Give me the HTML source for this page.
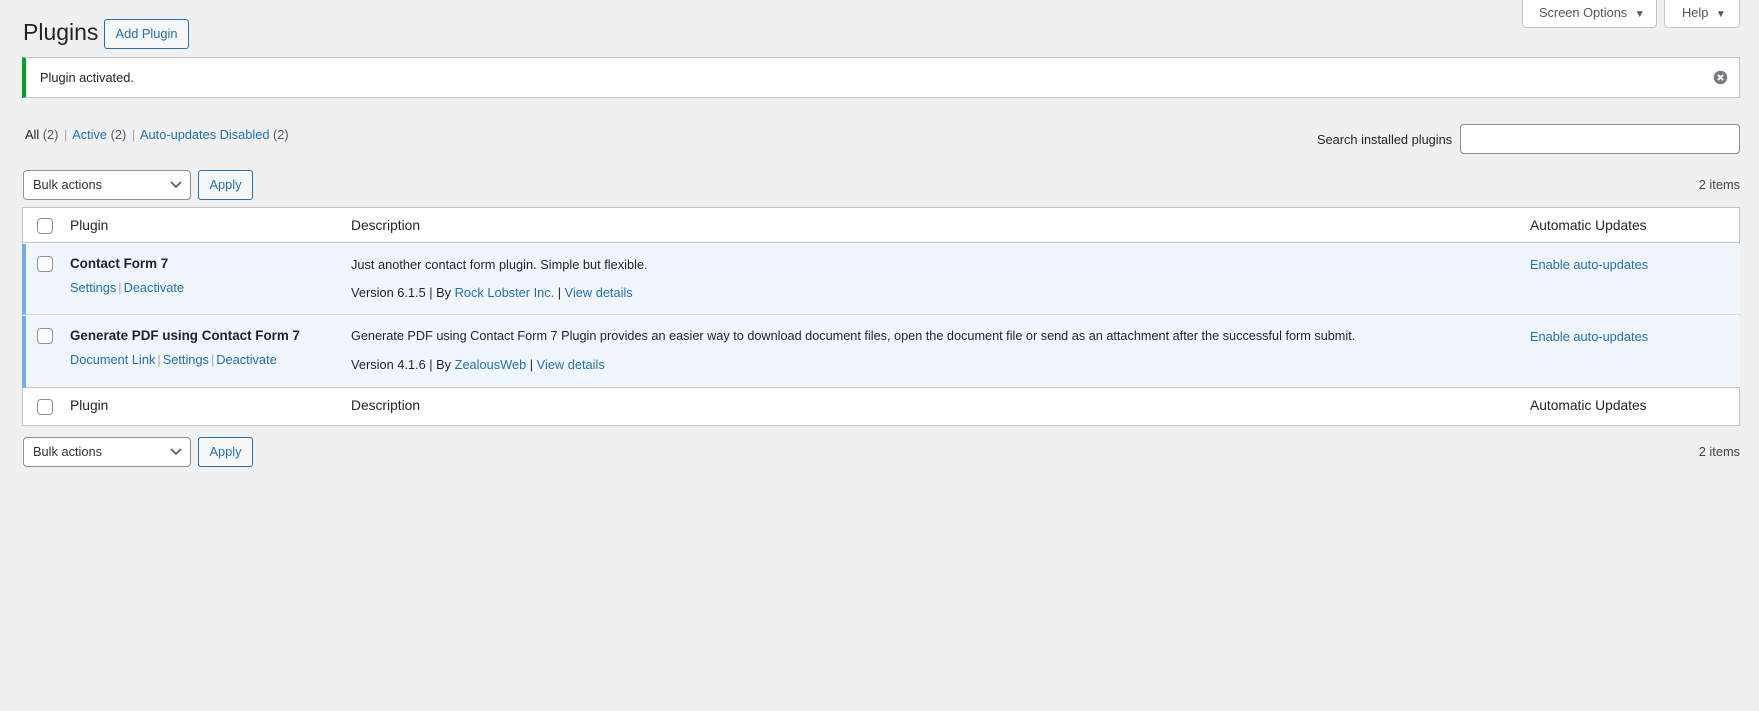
<!DOCTYPE html>
<html><head><meta charset="utf-8"><style>
*{box-sizing:border-box}
body{margin:0;width:1759px;height:711px;background:#f0f0f1;font-family:"Liberation Sans",sans-serif;font-size:12.8px;color:#3c434a;position:relative;overflow:hidden}
.a{position:absolute}
a{color:#2271b1;text-decoration:none}
.btn{position:absolute;border:1px solid #2271b1;border-radius:3px;color:#2271b1;background:#f6f7f7;text-align:center}
.sel{position:absolute;border:1px solid #8c8f94;border-radius:4px;background:#fff;color:#2c3338;padding-left:9px}
.cb{position:absolute;width:16px;height:16px;border:1px solid #8c8f94;border-radius:4px;background:#fff}
.row{position:absolute;left:22px;width:1718px}
.sep{color:#a7aaad;margin:0 2px}
</style></head><body>
<div class="a" style="left:23px;top:19px;font-size:23px;color:#1d2327">Plugins</div>
<div class="btn" style="left:104px;top:19px;width:85px;height:30px;line-height:28px;">Add Plugin</div>

<div class="a" style="left:1522px;top:-1px;width:135px;height:29px;background:#fff;border:1px solid #c3c4c7;border-radius:0 0 4px 4px;line-height:26px;padding-left:16px;color:#50575e">Screen Options <span style="font-size:10px;margin-left:4px">▼</span></div>
<div class="a" style="left:1664px;top:-1px;width:76px;height:29px;background:#fff;border:1px solid #c3c4c7;border-radius:0 0 4px 4px;line-height:26px;padding-left:17px;color:#50575e">Help <span style="font-size:10px;margin-left:4px">▼</span></div>

<div class="a" style="left:22px;top:57px;width:1718px;height:41px;background:#fff;border:1px solid #c3c4c7;border-left:4px solid #00a32a;line-height:39px;padding-left:14px;color:#1d2327">Plugin activated.
<svg class="a" style="right:11px;top:12px" width="15" height="15" viewBox="0 0 20 20"><circle cx="10" cy="10" r="9" fill="#787c82"/><path d="M6.5 6.5l7 7M13.5 6.5l-7 7" stroke="#fff" stroke-width="2.4"/></svg></div>

<div class="a" style="left:25px;top:127px"><b style="color:#1d2327;font-weight:normal">All</b> <span style="color:#50575e">(2)</span> <span class="sep">|</span> <a>Active</a> <span style="color:#50575e">(2)</span> <span class="sep">|</span> <a>Auto-updates Disabled</a> <span style="color:#50575e">(2)</span></div>

<div class="a" style="left:1317px;top:132px;color:#1d2327">Search installed plugins</div>
<div class="a" style="left:1460px;top:124px;width:280px;height:30px;background:#fff;border:1px solid #8c8f94;border-radius:4px"></div>

<div class="sel" style="left:23px;top:170px;width:168px;height:30px;line-height:28px">Bulk actions<svg class="a" style="right:8px;top:10px" width="12" height="8" viewBox="0 0 12 8"><path d="M1 1l5 5 5-5" stroke="#50575e" stroke-width="1.6" fill="none"/></svg></div>
<div class="btn" style="left:198px;top:170px;width:55px;height:30px;line-height:28px">Apply</div>
<div class="a" style="right:19px;top:177px;color:#3c434a">2 items</div>

<div class="a" style="left:22px;top:207px;width:1718px;height:219px;background:#fff;border:1px solid #c3c4c7"></div>
<div class="row" style="top:208px;height:35px;border-bottom:1px solid #c3c4c7;color:#1d2327;font-size:13.8px">
 <div class="cb" style="left:15px;top:10px"></div>
 <div class="a" style="left:48px;top:10px">Plugin</div>
 <div class="a" style="left:329px;top:10px">Description</div>
 <div class="a" style="left:1508px;top:10px">Automatic Updates</div>
</div>
<div class="row" style="top:244px;height:71px;background:#f0f6fc;border-left:4px solid #72aee6;border-bottom:1px solid #dcdcde">
 <div class="cb" style="left:11px;top:12px"></div>
 <div class="a" style="left:44px;top:12px;font-weight:bold;color:#1d2327;font-size:13.4px">Contact Form 7</div>
 <div class="a" style="left:44px;top:36px"><a>Settings</a><span class="sep">|</span><a>Deactivate</a></div>
 <div class="a" style="left:325px;top:13px;color:#1d2327">Just another contact form plugin. Simple but flexible.</div>
 <div class="a" style="left:325px;top:41px;color:#1d2327">Version 6.1.5 | By <a>Rock Lobster Inc.</a> | <a>View details</a></div>
 <div class="a" style="left:1504px;top:13px"><a>Enable auto-updates</a></div>
</div>
<div class="row" style="top:316px;height:72px;background:#f0f6fc;border-left:4px solid #72aee6;border-bottom:1px solid #c3c4c7">
 <div class="cb" style="left:11px;top:12px"></div>
 <div class="a" style="left:44px;top:12px;font-weight:bold;color:#1d2327;font-size:13.4px">Generate PDF using Contact Form 7</div>
 <div class="a" style="left:44px;top:36px"><a>Document Link</a><span class="sep">|</span><a>Settings</a><span class="sep">|</span><a>Deactivate</a></div>
 <div class="a" style="left:325px;top:13px;color:#1d2327;font-size:12.7px">Generate PDF using Contact Form 7 Plugin provides an easier way to download document files, open the document file or send as an attachment after the successful form submit.</div>
 <div class="a" style="left:325px;top:41px;color:#1d2327">Version 4.1.6 | By <a>ZealousWeb</a> | <a>View details</a></div>
 <div class="a" style="left:1504px;top:13px"><a>Enable auto-updates</a></div>
</div>
<div class="row" style="top:389px;height:36px;color:#1d2327;font-size:13.8px">
 <div class="cb" style="left:15px;top:10px"></div>
 <div class="a" style="left:48px;top:9px">Plugin</div>
 <div class="a" style="left:329px;top:9px">Description</div>
 <div class="a" style="left:1508px;top:9px">Automatic Updates</div>
</div>

<div class="sel" style="left:23px;top:437px;width:168px;height:30px;line-height:28px">Bulk actions<svg class="a" style="right:8px;top:10px" width="12" height="8" viewBox="0 0 12 8"><path d="M1 1l5 5 5-5" stroke="#50575e" stroke-width="1.6" fill="none"/></svg></div>
<div class="btn" style="left:198px;top:437px;width:55px;height:30px;line-height:28px">Apply</div>
<div class="a" style="right:19px;top:444px;color:#3c434a">2 items</div>
</body></html>
